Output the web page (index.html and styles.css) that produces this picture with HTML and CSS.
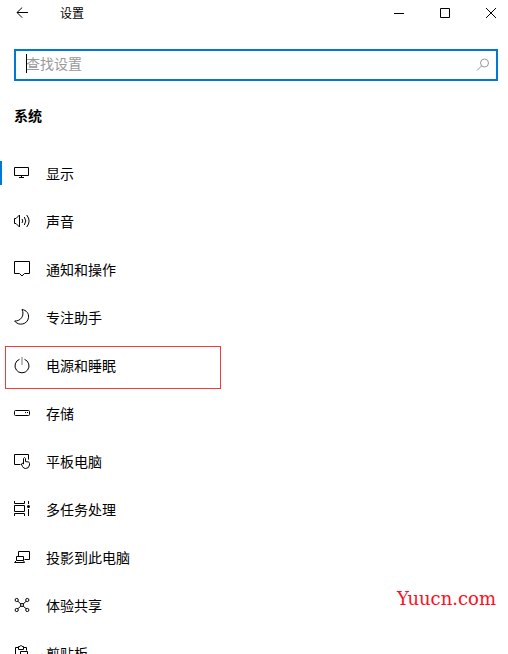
FILE: index.html
```
<!DOCTYPE html>
<html lang="zh-CN">
<head>
  <meta charset="UTF-8" />
  <meta name="viewport" content="width=device-width, initial-scale=1" />
  <title>设置</title>
  <link rel="stylesheet" href="styles.css">
</head>
<body>

<div class="window">

<header class="titlebar">
  <button class="back" type="button" aria-label="返回">
    <svg width="12" height="12" viewBox="0 0 12 12"><path d="M12 5.5H1M6.2 .5L1 5.5L6.2 10.7"/></svg>
  </button>
  <span class="title">设置</span>
  <div class="controls">
    <button type="button" aria-label="最小化">
      <svg width="10" height="10" viewBox="0 0 10 10"><path d="M0 5.5h10"/></svg>
    </button>
    <button type="button" aria-label="最大化">
      <svg width="10" height="10" viewBox="0 0 10 10"><path d="M.5 .5h9v9h-9z"/></svg>
    </button>
    <button type="button" aria-label="关闭">
      <svg width="10" height="10" viewBox="0 0 10 10"><path d="M0 0l10 10M10 0L0 10"/></svg>
    </button>
  </div>
</header>

<div class="search">
  <input type="text" placeholder="查找设置" aria-label="查找设置">
  <svg width="14" height="14" viewBox="0 0 14 14"><circle cx="8.5" cy="5" r="4"/><path d="M5.6 7.9L1 12.5"/></svg>
</div>

<h1>系统</h1>

<nav>
  <ul>
    <li><a href="#display" aria-current="page">
      <svg viewBox="0 0 18 18"><path d="M.5 3.5h14v8H.5zM7.5 11.5v2M5 13.5h5"/></svg>
      显示</a></li>
    <li><a href="#sound">
      <svg viewBox="0 0 18 18"><path d="M.5 6.5H2L5.5 3v12L2 11.5H.5z"/><path d="M8 7q1.6 2 0 4M10.3 5q3 4 0 8M12.7 3q4.8 6 0 12"/></svg>
      声音</a></li>
    <li><a href="#notifications">
      <svg viewBox="0 0 18 18"><path d="M.5 1.5h15v12H10.5L8 16l-2.5-2.5H.5z"/></svg>
      通知和操作</a></li>
    <li><a href="#focus">
      <svg viewBox="0 0 18 18"><path d="M8 1.5C12.5 2.2 15 5.5 14.5 9.5C13.8 16.5 4.5 18.5 .6 13C6.5 13.5 11 7.5 8 1.5z"/></svg>
      专注助手</a></li>
    <li><a href="#power" class="marked">
      <svg viewBox="0 0 18 18"><path d="M5.5 3.3a7 7 0 1 0 5 0"/><path class="grey" d="M8 1v8"/></svg>
      电源和睡眠</a></li>
    <li><a href="#storage">
      <svg viewBox="0 0 18 18"><rect x=".5" y="6.5" width="15" height="5" rx="1"/><path d="M11 8.5h1M13 8.5h1"/></svg>
      存储</a></li>
    <li><a href="#tablet">
      <svg viewBox="0 0 18 18"><path d="M6.500 12.5h-6v-10h14v5"/><path d="M9.5 12V6.5q1-2 2 0V9.5L14.5 10q1 .3 1 1.5v1.5q-.5 3.500-4 3.5q-2 0-3-2L7.3 12q.7-1.5 2.2 0"/></svg>
      平板电脑</a></li>
    <li><a href="#multitasking">
      <svg viewBox="0 0 18 18"><path d="M.5 1v2.5h10V1M.5 5.5h10v6H.5zM.5 16v-2.5h10V16M14.5 1v3M14.5 9v7"/><circle class="solid" cx="14.5" cy="6.5" r="1.5"/></svg>
      多任务处理</a></li>
    <li><a href="#projecting">
      <svg viewBox="0 0 18 18"><path d="M4.5 8.5v-5h11v8h-5M2.5 12.5v-4h7v4zL.5 14.5h10l-1-2"/></svg>
      投影到此电脑</a></li>
    <li><a href="#shared">
      <svg viewBox="0 0 18 18"><path d="M3 4.500L13 13.500M13 4.500L3 13.500"/><g class="paper"><circle cx="2.7" cy="4" r="1.6"/><circle cx="13.3" cy="4" r="1.6"/><circle cx="2.7" cy="14" r="1.6"/><circle cx="13.3" cy="14" r="1.6"/><circle cx="8" cy="9" r="1.5"/></g></svg>
      体验共享</a></li>
    <li><a href="#clipboard">
      <svg viewBox="0 0 18 18"><path d="M5.5 15.5h-4v-12h3M9.5 3.5h3v3M4.5 5.5v-3H6q1-2.5 2 0h1.5v3zM6.5 7.5h7v9h-7z"/></svg>
      剪贴板</a></li>
  </ul>
</nav>

<div class="watermark">Yuucn.com</div>

</div>

</body>
</html>
```
FILE: styles.css
```
*,
*::before,
*::after {
  box-sizing: border-box;
}
body {
  margin: 0;
  font-family: "Noto Sans CJK SC", sans-serif;
  font-size: 14px;
  line-height: 20px;
  background: #fff;
  color: #000;
}
svg {
  fill: none;
  stroke: #000;
  stroke-width: 1;
  flex-shrink: 0;
}
button {
  border: 0;
  padding: 0;
  background: none;
  display: flex;
  align-items: center;
  justify-content: center;
}

.window {
  position: relative;
  height: 100vh;
  overflow: hidden;
}

/* Title bar */
.titlebar {
  display: flex;
  align-items: center;
  height: 26px;
}
.back {
  width: 44px;
  height: 26px;
}
.title {
  margin-left: 16px;
  font-size: 12px;
}
.controls {
  display: flex;
  margin-left: auto;
  margin-right: -6px;
}
.controls button {
  width: 46px;
  height: 26px;
}

/* Search box */
.search {
  position: relative;
  display: flex;
  align-items: center;
  height: 32px;
  margin: 23px 10px 0 14px;
  padding-right: 6px;
  border: 2px solid #0078d7;
}
.search::before {
  content: "";
  position: absolute;
  left: 10px;
  top: 3px;
  width: 1px;
  height: 19px;
  background: #000;
}
.search input {
  flex: 1;
  min-width: 0;
  height: 28px;
  padding: 0 10px 4px;
  border: 0;
  outline: 0;
  background: none;
  font: inherit;
}
.search input::placeholder {
  color: #999;
}
.search svg {
  stroke: #999;
}

h1 {
  margin: 24px 14px 0;
  font-size: 14px;
  line-height: 20px;
  font-weight: 700;
}

/* Settings list */
nav ul {
  list-style: none;
  margin: 24px 0 0;
  padding: 0;
}
nav a {
  position: relative;
  display: flex;
  align-items: center;
  gap: 14px;
  height: 48px;
  padding-left: 14px;
  color: #000;
  text-decoration: none;
}
nav svg {
  width: 18px;
  height: 18px;
}
nav a[aria-current]::before {
  content: "";
  position: absolute;
  left: 0;
  top: 12px;
  width: 2px;
  height: 24px;
  background: #0078d7;
}
nav .marked::after {
  content: "";
  position: absolute;
  left: 5px;
  top: 5px;
  width: 216px;
  height: 43px;
  border: 1px solid #f43b3b;
}
.grey {
  stroke: #777;
}
.solid {
  fill: #000;
  stroke: none;
}
.paper {
  fill: #fff;
}

.watermark {
  position: absolute;
  right: 12px;
  bottom: 45px;
  font-family: "DejaVu Serif", serif;
  font-size: 18px;
  color: #fb1023;
}
```
